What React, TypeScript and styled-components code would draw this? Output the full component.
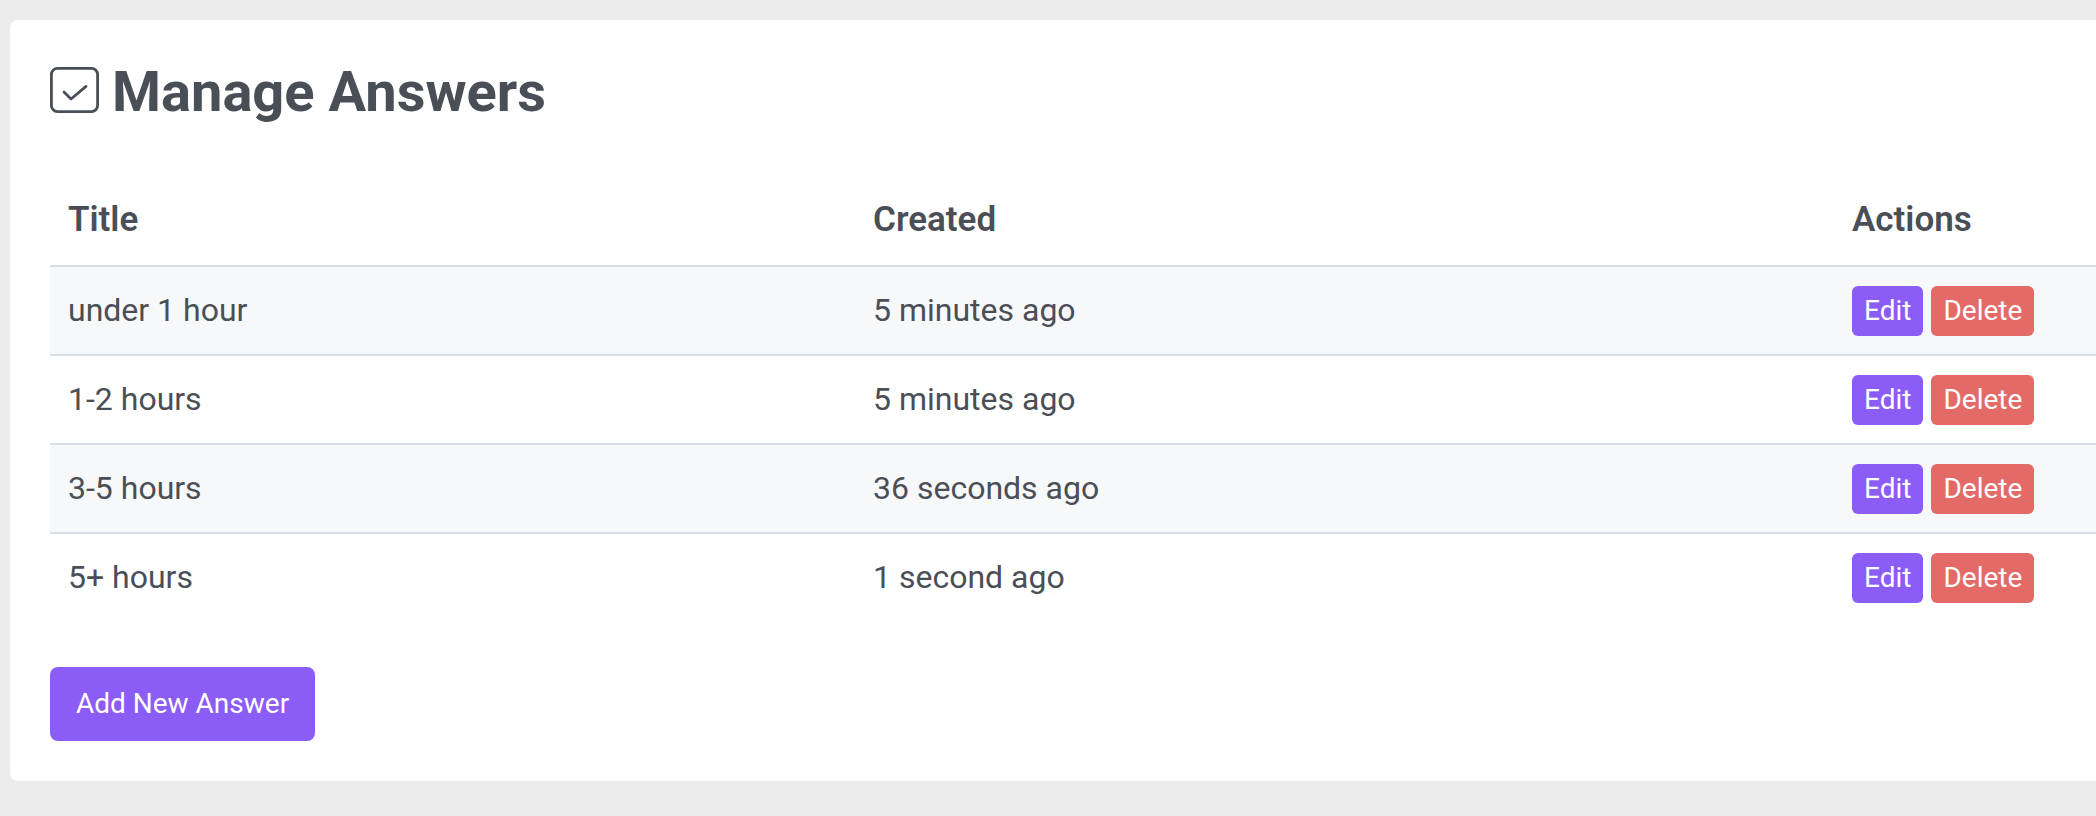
import styled, { createGlobalStyle } from 'styled-components';

const GlobalStyle = createGlobalStyle`
  html, body {
    margin: 0;
    padding: 0;
    background: #ebebeb;
  }
  body {
    font-family: Roboto, "Liberation Sans", Arial, sans-serif;
    color: #4a4f57;
    overflow: hidden;
  }
`;

const S = {
  Page: styled.div`
    display: flex;
    padding: 20px 0 34px 10px;
    overflow: hidden;
  `,
  Card: styled.section`
    flex: 0 0 2200px;
    background: #ffffff;
    border-radius: 8px;
    padding: 40px;
    box-sizing: border-box;
  `,
  Heading: styled.div`
    display: flex;
    align-items: center;
    gap: 12px;
    margin-bottom: 51px;
  `,
  HeadingIcon: styled.svg`
    flex: 0 0 auto;
    margin-bottom: 4px;
  `,
  Title: styled.h1`
    margin: 0;
    font-size: 56px;
    line-height: 64px;
    font-weight: 700;
    color: #4a4f57;
  `,
  Row: styled.div<{ $striped?: boolean; $head?: boolean }>`
    display: grid;
    grid-template-columns: 805px 979px 1fr;
    align-items: center;
    height: ${(p) => (p.$head ? '90px' : '87px')};
    background: ${(p) => (p.$striped ? '#f7f8fa' : '#ffffff')};
    border-top: ${(p) => (p.$head ? 'none' : '2px solid #d8dee4')};
  `,
  HeadCell: styled.div`
    padding: 0 18px;
    font-size: 35px;
    line-height: 54px;
    font-weight: 600;
    color: #4a4f57;
  `,
  Cell: styled.div`
    padding: 0 18px;
    font-size: 32px;
    line-height: 51px;
    color: #4a4f57;
  `,
  Actions: styled.div`
    display: flex;
    align-items: center;
    gap: 8px;
    padding: 0 18px;
  `,
  SmallButton: styled.button<{ $tone: 'edit' | 'delete' }>`
    height: 50px;
    padding: 0 12px;
    border: none;
    border-radius: 6px;
    background: ${(p) => (p.$tone === 'edit' ? '#8b5cf6' : '#e36a66')};
    color: #ffffff;
    font-family: inherit;
    font-size: 28px;
    line-height: 50px;
    cursor: pointer;
  `,
  AddButton: styled.button`
    margin-top: 46px;
    padding: 16px 26px;
    border: none;
    border-radius: 8px;
    background: #8b5cf6;
    color: #ffffff;
    font-family: inherit;
    font-size: 28px;
    line-height: 42px;
    cursor: pointer;
  `,
};

const answers = [
  { title: 'under 1 hour', created: '5 minutes ago' },
  { title: '1-2 hours', created: '5 minutes ago' },
  { title: '3-5 hours', created: '36 seconds ago' },
  { title: '5+ hours', created: '1 second ago' },
];

const CheckSquare = () => (
  <S.HeadingIcon width="50" height="46" viewBox="0 0 50 46" fill="none">
    <rect x="1.4" y="1.4" width="46.2" height="43.2" rx="6" stroke="#4a4f57" strokeWidth="2.8" />
    <path
      d="M14 25 L21 32 L36 19.4"
      stroke="#4a4f57"
      strokeWidth="2.8"
      strokeLinecap="round"
      strokeLinejoin="round"
    />
  </S.HeadingIcon>
);

const App = () => {
  return (
    <>
      <GlobalStyle />
      <S.Page>
        <S.Card>
          <S.Heading>
            <CheckSquare />
            <S.Title>Manage Answers</S.Title>
          </S.Heading>
          <div>
            <S.Row $head>
              <S.HeadCell>Title</S.HeadCell>
              <S.HeadCell>Created</S.HeadCell>
              <S.HeadCell>Actions</S.HeadCell>
            </S.Row>
            {answers.map((a, i) => (
              <S.Row key={a.title} $striped={i % 2 === 0}>
                <S.Cell>{a.title}</S.Cell>
                <S.Cell>{a.created}</S.Cell>
                <S.Actions>
                  <S.SmallButton $tone="edit">Edit</S.SmallButton>
                  <S.SmallButton $tone="delete">Delete</S.SmallButton>
                </S.Actions>
              </S.Row>
            ))}
          </div>
          <S.AddButton>Add New Answer</S.AddButton>
        </S.Card>
      </S.Page>
    </>
  );
};

export default App;
